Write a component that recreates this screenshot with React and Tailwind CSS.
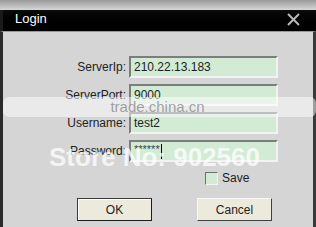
import React from 'react';

const inputCls =
  "h-[22px] w-[149px] bg-[#d2ebd4] border-2 border-t-[#7d7d7d] border-l-[#7d7d7d] border-r-[#f2f2f2] border-b-[#f2f2f2] pl-[3px] flex items-center text-[12px] text-[#1e1e1e]";

function Field({ label, children }) {
  return (
    <>
      <div className="text-right text-[12px] text-[#222] leading-none pr-[3px] flex items-center justify-end h-[22px]">{label}</div>
      <div className={inputCls}>{children}</div>
    </>
  );
}

export default function App() {
  return (
    <div className="relative w-[316px] h-[227px] overflow-hidden flex flex-col bg-[#d5d5d5]" style={{ fontFamily: '"Liberation Sans", Arial, sans-serif' }}>
      <div className="h-[10px] bg-gradient-to-b from-[#9a9a9a] to-[#d8d8d8]" />
      <div className="h-[21px] bg-gradient-to-b from-[#0c0c0c] to-[#000] flex items-center justify-between pl-[12px] pr-[15px] border-l-[3px] border-[#1a1a1a]">
        <span className="text-white text-[13px] -mt-[4px]">Login</span>
        <svg width="15" height="15" viewBox="0 0 15 15" className="-mt-[3px]">
          <path d="M2 2 L13 13 M13 2 L2 13" stroke="#b8b8b8" strokeWidth="2" />
        </svg>
      </div>
      <div className="flex-1 border-l-[3px] border-r-[3px] border-l-[#2a2a2a] border-r-[#3a3a3a] border-t border-t-[#9a9a9a] bg-[#d5d5d5]">
        <div className="grid grid-cols-[126px_149px] gap-y-[6px] mt-[24px]">
          <Field label="ServerIp:">210.22.13.183</Field>
          <Field label="ServerPort:">9000</Field>
          <Field label="Username:">test2</Field>
          <Field label="Password:">
            <span className="text-[11px] -mt-[4px] text-[#444]">******</span>
            <span className="w-px h-[15px] bg-black ml-px" />
          </Field>
        </div>
        <div className="flex items-center ml-[202px] mt-[7px] gap-[4px]">
          <div className="w-[13px] h-[13px] bg-[#d2ebd4] border border-t-[#6f6f6f] border-l-[#6f6f6f] border-r-[#f2f2f2] border-b-[#f2f2f2]" />
          <span className="text-[12px] text-[#222]">Save</span>
        </div>
        <div className="flex ml-[74px] mt-[11px] gap-[45px]">
          <button className="w-[75px] h-[23px] bg-[#ece9dd] border border-[#1c1c1c] border-t-[#3a3a3a] border-l-[#3a3a3a] text-[12px] text-[#222] shadow-[inset_1px_1px_0_#fff]">OK</button>
          <button className="w-[75px] h-[23px] bg-[#ece9dd] border border-t-[#f8f8f8] border-l-[#f8f8f8] border-r-[#404040] border-b-[#404040] text-[12px] text-[#222]">Cancel</button>
        </div>
      </div>
      <div className="absolute left-[3px] right-0 top-[97px] h-[20px] bg-white/50 rounded-[6px] flex items-center justify-center">
        <span className="text-[15px] text-[#8a8a8a]/80 ml-[-4px]">trade.china.cn</span>
      </div>
      <div className="absolute left-[49px] top-[144px] text-[26px] leading-none font-bold text-white/75 whitespace-nowrap">
        Store No: 902560
      </div>
    </div>
  );
}
